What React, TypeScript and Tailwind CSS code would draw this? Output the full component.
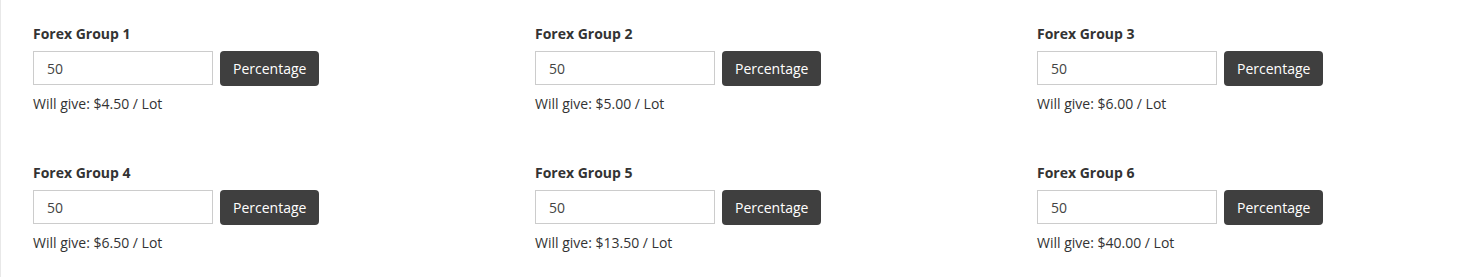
import React from 'react';

const groups = [
  { name: 'Forex Group 1', value: '50', give: '$4.50' },
  { name: 'Forex Group 2', value: '50', give: '$5.00' },
  { name: 'Forex Group 3', value: '50', give: '$6.00' },
  { name: 'Forex Group 4', value: '50', give: '$6.50' },
  { name: 'Forex Group 5', value: '50', give: '$13.50' },
  { name: 'Forex Group 6', value: '50', give: '$40.00' },
];

function GroupField({ name, value, give }: { name: string; value: string; give: string }) {
  return (
    <div className="h-[139px]">
      <label className="block text-[14px] leading-[18px] font-bold text-[#333]">{name}</label>
      <div className="mt-2 flex items-start gap-[7px]">
        <input
          type="text"
          defaultValue={value}
          className="w-[180px] h-[34px] border border-[#ccc] bg-white px-[13px] text-[14px] text-[#444] outline-none"
        />
        <button
          type="button"
          className="h-[35px] px-[13px] rounded bg-[#3f3f3f] text-white text-[14px]"
        >
          Percentage
        </button>
      </div>
      <p className="mt-[9px] text-[14px] leading-[18px] text-[#333]">Will give: {give} / Lot</p>
    </div>
  );
}

export default function App() {
  return (
    <div
      className="h-[277px] overflow-hidden bg-white border-l border-[#e8e8e8] pl-8 pt-[25px]"
      style={{ fontFamily: '"Open Sans", "Noto Sans", sans-serif' }}
    >
      <div className="grid grid-cols-[502px_502px_1fr]">
        {groups.map((g) => (
          <GroupField key={g.name} {...g} />
        ))}
      </div>
    </div>
  );
}
